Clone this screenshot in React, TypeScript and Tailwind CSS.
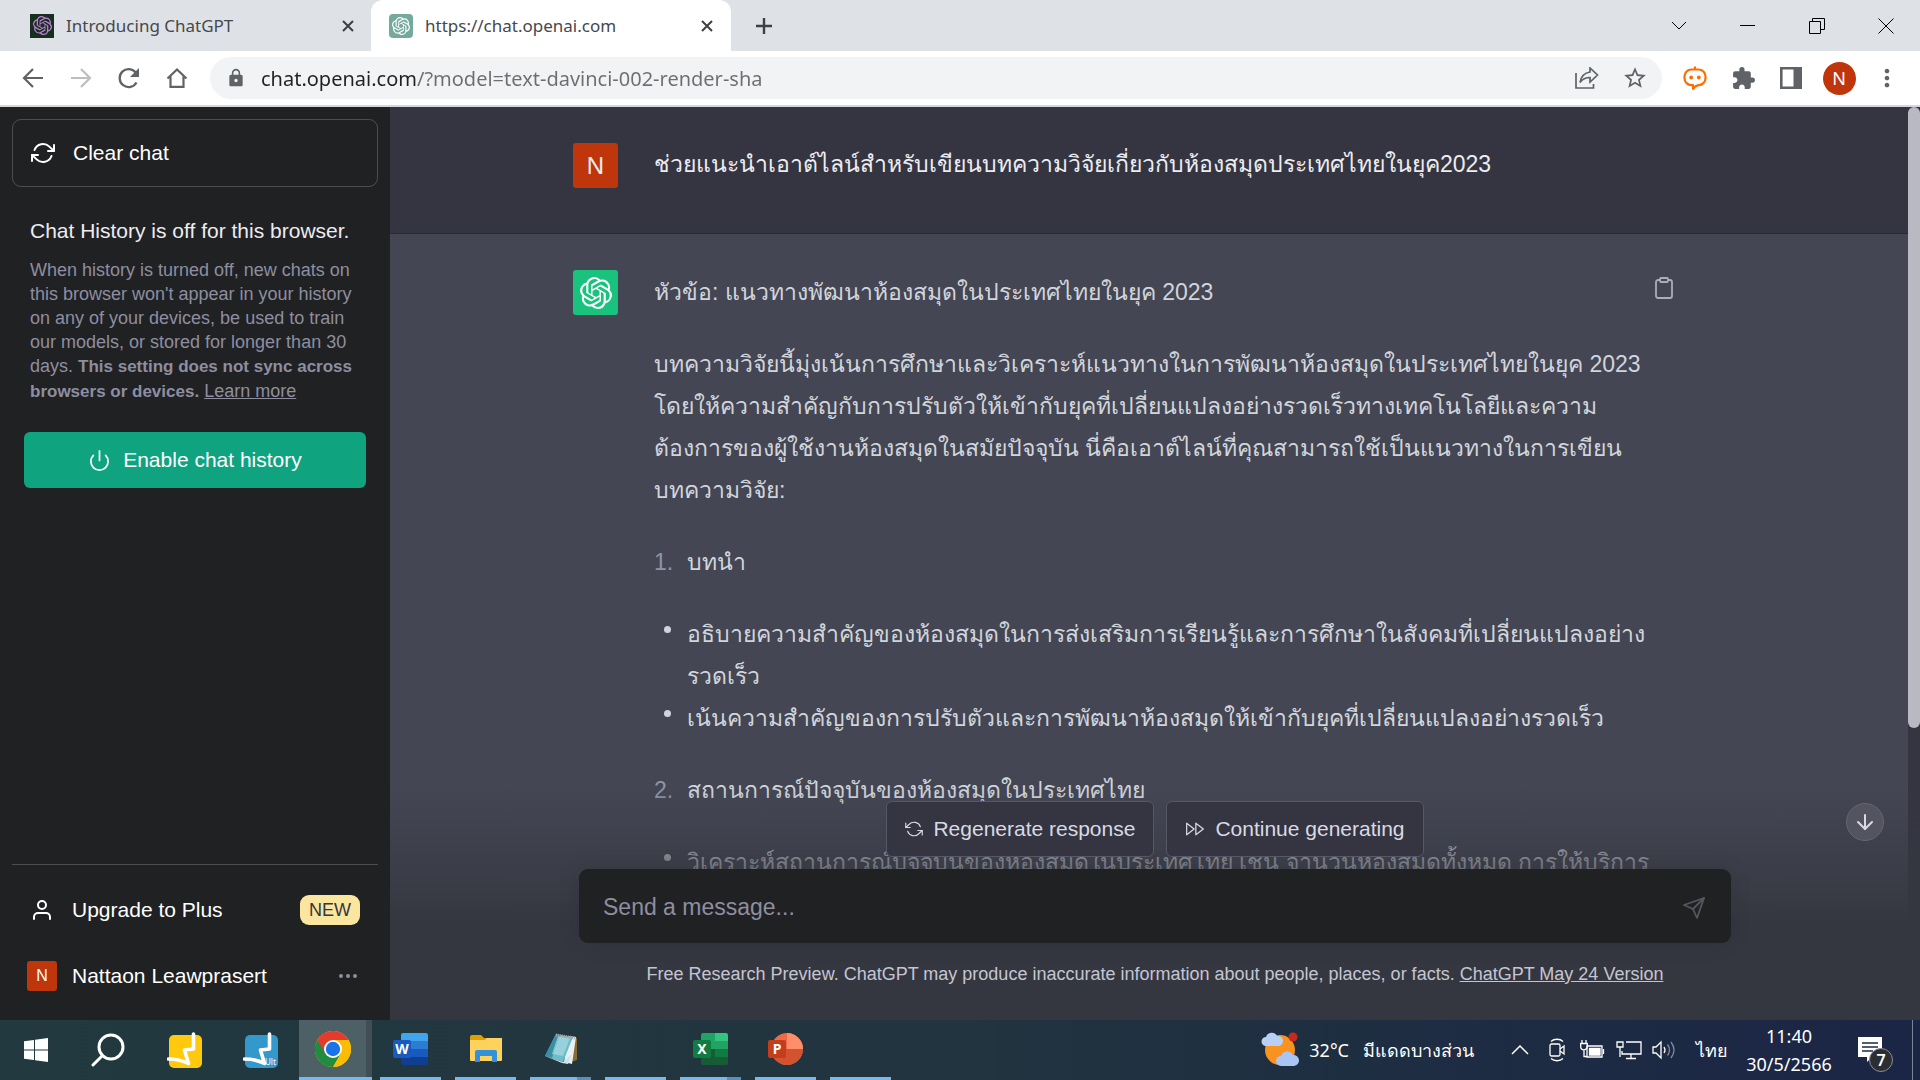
import type { ReactNode } from "react";
import {
    FiArrowDown,
    FiClipboard,
    FiFastForward,
    FiMoreHorizontal,
    FiPower,
    FiRefreshCcw,
    FiRefreshCw,
    FiSend,
    FiUser,
} from "react-icons/fi";
import { MdExtension, MdLock, MdMoreVert, MdStarBorder } from "react-icons/md";
import { SiOpenai } from "react-icons/si";

const outline = [
    {
        title: ["บทนำ"],
        points: [
            ["อธิบายความสำคัญของห้องสมุดในการส่งเสริมการเรียนรู้และการศึกษาในสังคมที่เปลี่ยนแปลงอย่าง", "รวดเร็ว"],
            ["เน้นความสำคัญของการปรับตัวและการพัฒนาห้องสมุดให้เข้ากับยุคที่เปลี่ยนแปลงอย่างรวดเร็ว"],
        ],
    },
    {
        title: ["สถานการณ์ปัจจุบันของห้องสมุดในประเทศไทย"],
        points: [
            ["วิเคราะห์สถานการณ์ปัจจุบันของห้องสมุดในประเทศไทย เช่น จำนวนห้องสมุดทั้งหมด การให้บริการ"],
        ],
    },
];

const intro = [
    "บทความวิจัยนี้มุ่งเน้นการศึกษาและวิเคราะห์แนวทางในการพัฒนาห้องสมุดในประเทศไทยในยุค 2023",
    "โดยให้ความสำคัญกับการปรับตัวให้เข้ากับยุคที่เปลี่ยนแปลงอย่างรวดเร็วทางเทคโนโลยีและความ",
    "ต้องการของผู้ใช้งานห้องสมุดในสมัยปัจจุบัน นี่คือเอาต์ไลน์ที่คุณสามารถใช้เป็นแนวทางในการเขียน",
    "บทความวิจัย:",
];

function Lines({ lines }: { lines: string[] }) {
    return (
        <>
            {lines.map((line) => (
                <span key={line} className="block whitespace-nowrap">{line}</span>
            ))}
        </>
    );
}

function CloseIcon() {
    return (
        <svg width="12" height="12" viewBox="0 0 12 12" stroke="#3c4043" strokeWidth="2" fill="none">
            <path d="M1 1l10 10M11 1L1 11" />
        </svg>
    );
}

function Tab({ title, active, icon }: { title: string; active?: boolean; icon: ReactNode }) {
    return (
        <div className={active
            ? "flex h-full w-[360px] items-center gap-3 rounded-t-xl bg-white pr-[18px] pl-[18px]"
            : "flex h-full w-[371px] items-center gap-3 pr-[17px] pl-[30px]"}
        >
            {icon}
            <span className="flex-1 text-[17px] text-[#45494d]">{title}</span>
            <button aria-label={`Close ${title}`}><CloseIcon /></button>
        </div>
    );
}

function TabStrip() {
    return (
        <div className="flex h-[51px] items-center bg-[#dee1e6]">
            <Tab
                title="Introducing ChatGPT"
                icon={<span className="flex size-6 items-center justify-center bg-[#15301c] text-[#c77be0]"><SiOpenai size={19} /></span>}
            />
            <Tab
                title="https://chat.openai.com"
                active
                icon={<span className="flex size-6 items-center justify-center rounded bg-[#75a99c] text-white"><SiOpenai size={18} /></span>}
            />
            <button aria-label="New tab" className="ml-6">
                <svg width="18" height="18" viewBox="0 0 18 18" stroke="#3c4043" strokeWidth="2.4" fill="none">
                    <path d="M9 1v16M1 9h16" />
                </svg>
            </button>
            <div className="ml-auto flex text-black">
                <button aria-label="Search tabs" className="flex h-[42px] w-[69px] items-center justify-center">
                    <svg width="16" height="10" viewBox="0 0 16 10" stroke="currentColor" fill="none"><path d="M1 1l7 7 7-7" /></svg>
                </button>
                <button aria-label="Minimize" className="flex h-[42px] w-[69px] items-center justify-center">
                    <svg width="15" height="15" viewBox="0 0 15 15" stroke="currentColor" fill="none"><path d="M0 7.5h15" /></svg>
                </button>
                <button aria-label="Restore" className="flex h-[42px] w-[69px] items-center justify-center">
                    <svg width="16" height="16" viewBox="0 0 16 16" stroke="currentColor" fill="none">
                        <path d="M.5 3.5h11v12H.5zM3.5 3.5v-3h12v11h-4" />
                    </svg>
                </button>
                <button aria-label="Close window" className="flex h-[42px] w-[69px] items-center justify-center">
                    <svg width="16" height="16" viewBox="0 0 16 16" stroke="currentColor" fill="none"><path d="M.5.5l15 15M15.5.5l-15 15" /></svg>
                </button>
            </div>
        </div>
    );
}

function NavButton({ label, children }: { label: string; children: ReactNode }) {
    return (
        <button aria-label={label} className="flex size-12 items-center justify-center text-[#5f6368]">
            {children}
        </button>
    );
}

function Toolbar() {
    return (
        <div className="flex h-14 items-center border-b-2 border-[#d5d7da] bg-white pr-[9px] pl-[9px]">
            <NavButton label="Back">
                <svg width="22" height="20" viewBox="0 0 22 20" stroke="currentColor" strokeWidth="2.2" fill="none"><path d="M21 10H2M11 1l-9 9 9 9" /></svg>
            </NavButton>
            <NavButton label="Forward">
                <svg width="22" height="20" viewBox="0 0 22 20" stroke="#bcbec1" strokeWidth="2.2" fill="none"><path d="M1 10h19M11 1l9 9-9 9" /></svg>
            </NavButton>
            <NavButton label="Reload">
                <svg width="22" height="22" viewBox="0 0 22 22" fill="none">
                    <path d="M18.5 15.5a9 9 0 1 1-.6-9.8" stroke="currentColor" strokeWidth="2.3" />
                    <path d="M21 1v9h-9z" fill="currentColor" />
                </svg>
            </NavButton>
            <NavButton label="Home">
                <svg width="22" height="22" viewBox="0 0 22 22" fill="none" stroke="currentColor" strokeWidth="2.2">
                    <path d="M1.5 11.5L11 2.5l9.500 9M4.500 9.500v10.400h13V9.500" />
                </svg>
            </NavButton>
            <div className="ml-[9px] flex h-[42px] flex-1 items-center rounded-full bg-[#f1f3f4] pr-[14px] pl-4 text-[#5f6368]">
                <MdLock size={20} />
                {/* host in near-black, path in grey */}
                <input
                    aria-label="Address"
                    defaultValue="chat.openai.com/?model=text-davinci-002-render-sha"
                    className="ml-[15px] h-[42px] min-w-0 flex-1 bg-[linear-gradient(to_right,#202124_156px,#6b6f74_156px)] bg-clip-text text-xl text-transparent outline-none"
                />
                <button aria-label="Share" className="mr-[23px]">
                    <svg width="24" height="22" viewBox="0 0 24 22" fill="none" stroke="currentColor" strokeWidth="1.7">
                        <path d="M1 6v15h17.5v-4M15 5V1l7.500 7-7.500 7v-4.500c-4.500 0-7.500 1.500-10 5C6 10 9.500 5.800 15 5z" />
                    </svg>
                </button>
                <button aria-label="Bookmark"><MdStarBorder size={26} /></button>
            </div>
            <div className="ml-[9px] flex">
                <NavButton label="Chat extension">
                    <svg width="24" height="24" viewBox="0 0 24 24" fill="none" stroke="#ff6d00" strokeWidth="2.2">
                        <path d="M12 .5V3M10 19.200H8.500a7 7 0 0 1-7-7V10.500a7 7 0 0 1 7-7h7a7 7 0 0 1 7 7v1.700a7 7 0 0 1-7 7c-2 .3-4 1.500-5.500 3.600z" strokeLinejoin="round" />
                        <circle cx="8.2" cy="11.5" r="1.9" fill="#ff6d00" stroke="none" />
                        <circle cx="15.8" cy="11.5" r="1.9" fill="#ff6d00" stroke="none" />
                    </svg>
                </NavButton>
                <NavButton label="Extensions"><MdExtension size={25} /></NavButton>
                <NavButton label="Side panel">
                    <svg width="22" height="22" viewBox="0 0 22 22" fill="none">
                        <path d="M1.3 1.3h19.400v19.400H1.300z" stroke="currentColor" strokeWidth="2.6" />
                        <path d="M13.500 0H22v22h-8.500z" fill="currentColor" />
                    </svg>
                </NavButton>
                <button className="flex size-12 items-center justify-center">
                    <span className="flex size-[33px] items-center justify-center rounded-full bg-[#bf360c] text-lg text-white">N</span>
                </button>
                <NavButton label="Menu"><MdMoreVert size={28} /></NavButton>
            </div>
        </div>
    );
}

function Sidebar() {
    return (
        <aside className="flex w-[390px] shrink-0 flex-col bg-[#202123] px-3 pt-3 pb-[11px] text-[21px] leading-[30px] text-white">
            <button className="flex h-[68px] items-center gap-[18px] rounded-[9px] border border-white/20 pl-[18px] text-left">
                <FiRefreshCw size={24} />
                Clear chat
            </button>
            <div className="mt-[29px] px-[18px]">
                <h2 className="whitespace-nowrap text-[#ececf1]">Chat History is off for this browser.</h2>
                <p className="mt-3 text-lg leading-6 whitespace-nowrap text-[#8e8ea0]">
                    When history is turned off, new chats on<br />
                    this browser won&apos;t appear in your history<br />
                    on any of your devices, be used to train<br />
                    our models, or stored for longer than 30<br />
                    days. <strong className="text-[17px] font-bold">This setting does not sync across<br />
                    browsers or devices.</strong> <a href="#learn" className="underline">Learn more</a>
                </p>
            </div>
            <button className="mx-3 mt-7 flex h-14 items-center justify-center gap-3 rounded-md bg-[#10a37f]">
                <FiPower size={23} strokeWidth={1.8} />
                Enable chat history
            </button>
            <div className="mt-auto border-t border-white/20 pt-3">
                <button className="flex h-[66px] w-full items-center pr-[18px] pl-[18px]">
                    <FiUser size={24} />
                    <span className="ml-[18px] flex-1 text-left">Upgrade to Plus</span>
                    <span className="rounded-[9px] bg-[#fae69e] px-[9px] text-lg leading-[30px] text-[#343541]">NEW</span>
                </button>
                <button className="flex h-[66px] w-full items-center pr-[18px] pl-[15px]">
                    <span className="flex size-[30px] items-center justify-center rounded-[3px] bg-[#bf360c] text-base">N</span>
                    <span className="ml-[15px] flex-1 text-left">Nattaon Leawprasert</span>
                    <FiMoreHorizontal size={24} className="text-[#8e8ea0]" />
                </button>
            </div>
        </aside>
    );
}

function Conversation() {
    return (
        <div className="min-w-0 flex-1 text-[23px] leading-[42px]">
            <div className="border-b border-[#2a2b32] bg-[#343541] pt-9 pb-[45px]">
                <div className="mx-auto flex max-w-[1152px] gap-9 text-[#ececf1]">
                    <span className="flex size-[45px] shrink-0 items-center justify-center rounded-[3px] bg-[#bf360c] text-2xl">N</span>
                    <p className="whitespace-nowrap">ช่วยแนะนำเอาต์ไลน์สำหรับเขียนบทความวิจัยเกี่ยวกับห้องสมุดประเทศไทยในยุค2023</p>
                </div>
            </div>
            <div className="bg-[#444654] pt-9">
                <div className="mx-auto flex max-w-[1152px] gap-9 text-[#d1d5db]">
                    <span className="flex size-[45px] shrink-0 items-center justify-center rounded-[3px] bg-[#19c37d] text-white"><SiOpenai size={32} /></span>
                    <div className="flex min-w-0 flex-1 flex-col gap-[30px] pt-px">
                        <p>หัวข้อ: แนวทางพัฒนาห้องสมุดในประเทศไทยในยุค 2023</p>
                        <p><Lines lines={intro} /></p>
                        {outline.map((section, i) => (
                            <section key={section.title[0]} className="flex flex-col gap-[30px]">
                                <div className="flex">
                                    <span className="w-[33px] text-[#8e95a6]">{i + 1}.</span>
                                    <h3><Lines lines={section.title} /></h3>
                                </div>
                                <ul>
                                    {section.points.map((point) => (
                                        <li key={point[0]} className="flex">
                                            <span className="mt-[13px] mr-4 ml-[10px] size-[7px] shrink-0 rounded-full bg-[#d1d5db]" />
                                            <div><Lines lines={point} /></div>
                                        </li>
                                    ))}
                                </ul>
                            </section>
                        ))}
                        <div className="h-40" />
                    </div>
                    <button aria-label="Copy" className="mt-[6px] mr-[49px] self-start text-[#acacbe]"><FiClipboard size={24} strokeWidth={1.8} /></button>
                </div>
            </div>
        </div>
    );
}

function Composer() {
    return (
        <div className="absolute inset-x-0 bottom-0 bg-linear-to-b from-[#353740]/0 to-[#353740] to-[59%] pt-[15px] text-[#d9d9e3]">
            <div className="mx-auto max-w-[1152px]">
                <div className="flex justify-center gap-3 text-[21px]">
                    <button className="flex h-[56px] items-center gap-[10px] rounded-md border border-[#565869] bg-[#343541] px-[18px]">
                        <FiRefreshCcw size={18} strokeWidth={1.5} />
                        Regenerate response
                    </button>
                    <button className="flex h-[56px] items-center gap-[10px] rounded-md border border-[#565869] bg-[#343541] px-[18px]">
                        <FiFastForward size={20} strokeWidth={1.5} />
                        Continue generating
                    </button>
                </div>
                <form className="mt-3 flex h-[74px] items-center rounded-[9px] bg-[#202123] pt-0.5 pr-[25px] pl-6 shadow-[0_0_22px_rgba(0,0,0,0.1)]">
                    <input aria-label="Send a message" placeholder="Send a message..." className="flex-1 bg-transparent text-[23px] outline-none placeholder:text-[#8e8ea0]" />
                    <button type="button" aria-label="Send" className="mt-0.5 text-[#55565f]"><FiSend size={24} strokeWidth={1.8} /></button>
                </form>
                <p className="pt-[19px] pb-[34px] text-center text-lg leading-6 text-[#c5c5d2]">
                    Free Research Preview. ChatGPT may produce inaccurate information about people, places, or facts.{" "}
                    <a href="#release" className="underline">ChatGPT May 24 Version</a>
                </p>
            </div>
            <button aria-label="Scroll to bottom" className="absolute top-[17px] right-9 flex size-[38px] items-center justify-center rounded-full border border-[#65666f] bg-[#53545f]">
                <FiArrowDown size={24} />
            </button>
        </div>
    );
}

function OfficeLetter({ letter, fill }: { letter: string; fill: string }) {
    return (
        <>
            <rect x="0" y="7" width="18" height="18" rx="2" fill={fill} />
            <text x="9" y="21" textAnchor="middle" fontSize="14" fontWeight="700" fill="#fff">{letter}</text>
        </>
    );
}

function WordIcon() {
    return (
        <svg width="36" height="32" viewBox="0 0 36 32">
            <path d="M8 2a2 2 0 0 1 2-2h23a2 2 0 0 1 2 2v6H8z" fill="#41a5ee" />
            <path d="M8 8h27v8H8z" fill="#2b7cd3" />
            <path d="M8 16h27v8H8z" fill="#185abd" />
            <path d="M8 24h27v6a2 2 0 0 1-2 2H10a2 2 0 0 1-2-2z" fill="#103f91" />
            <OfficeLetter letter="W" fill="#185abd" />
        </svg>
    );
}

function ExcelIcon() {
    return (
        <svg width="36" height="32" viewBox="0 0 36 32">
            <path d="M8 2a2 2 0 0 1 2-2h12v8H8z" fill="#21a366" />
            <path d="M22 0h11a2 2 0 0 1 2 2v6H22z" fill="#33c481" />
            <path d="M8 8h14v8H8z" fill="#21a366" />
            <path d="M22 8h13v8H22z" fill="#21a366" />
            <path d="M22 16h13v8H22z" fill="#107c41" />
            <path d="M8 16h14v8h13v6a2 2 0 0 1-2 2H10a2 2 0 0 1-2-2z" fill="#185c37" />
            <OfficeLetter letter="X" fill="#107c41" />
        </svg>
    );
}

function PowerPointIcon() {
    return (
        <svg width="36" height="32" viewBox="0 0 36 32">
            <circle cx="19" cy="16" r="16" fill="#ed6c47" />
            <path d="M19 0a16 16 0 0 1 16 16H19z" fill="#ff8f6b" />
            <path d="M3 16h32a16 16 0 0 1-32 0z" fill="#d35230" />
            <OfficeLetter letter="P" fill="#c43e1c" />
        </svg>
    );
}

function ExplorerIcon() {
    return (
        <svg width="34" height="28" viewBox="0 0 34 28">
            <path d="M1 2a2 2 0 0 1 2-2h9l3 3h17v6H1z" fill="#e0a100" />
            <path d="M1 5h15l2-2h15v22a1 1 0 0 1-1 1H2a1 1 0 0 1-1-1z" fill="#ffd25e" />
            <path d="M6 27V17a2 2 0 0 1 2-2h18a2 2 0 0 1 2 2v10h-5v-6H11v6z" fill="#3391dc" />
        </svg>
    );
}

function NotepadIcon() {
    return (
        <svg width="34" height="32" viewBox="0 0 34 32">
            <path d="M29 4l4 1v22l-6 2z" fill="#8a6a35" />
            <path d="M24 3l8 1-4 27-8-2z" fill="#e8f0f2" />
            <path d="M12 1L1 23l18 6 10-25z" fill="#6dbccb" />
            <path d="M12 1L1 23l7 2 8-23z" fill="#3a8fa3" />
            <path d="M14 3l12 2-7 18-11-2z" fill="#a9dae3" opacity=".7" />
            <path d="M1 23l18 6 9-8-4 10-6-1z" fill="#cfe3e7" />
            <path d="M12 2l19 3" stroke="#9aa5a8" strokeWidth="3" strokeDasharray="1 1" />
        </svg>
    );
}

function ChromeIcon() {
    return (
        <svg width="36" height="36" viewBox="0 0 48 48">
            <circle cx="24" cy="24" r="24" fill="#fbbc04" />
            <path d="M24 24L3.200 12A24 24 0 0 0 24 48l10.400-18z" fill="#1e8e3e" />
            <path d="M24 12h20.800A24 24 0 0 0 3.200 12l10.400 18z" fill="#e33b2e" />
            <path d="M34.400 30L24 48a24 24 0 0 0 20.800-36H24z" fill="#fbbc04" />
            <circle cx="24" cy="24" r="12" fill="#fff" />
            <circle cx="24" cy="24" r="9.6" fill="#1a73e8" />
        </svg>
    );
}

function ReaderIcon({ fill, caption }: { fill: string; caption?: string }) {
    return (
        <svg width="36" height="36" viewBox="0 0 36 36">
            <rect x="2" y="3" width="33" height="33" rx="5" fill={fill} />
            <path d="M1.500 27c7 0 13 1 20 4.500L17.500 18l9-1V2" fill="none" stroke="#fff" strokeWidth="3.6" strokeLinecap="round" strokeLinejoin="round" />
            {caption && <text x="22" y="33" fontSize="8" fill="#fff">{caption}</text>}
        </svg>
    );
}

const apps = [
    { name: "Chrome", icon: <ChromeIcon />, active: true },
    { name: "Word", icon: <WordIcon /> },
    { name: "File Explorer", icon: <ExplorerIcon /> },
    { name: "Notepad", icon: <NotepadIcon />, stacked: true },
    { name: "Photos", icon: null },
    { name: "Excel", icon: <ExcelIcon />, stacked: true },
    { name: "PowerPoint", icon: <PowerPointIcon /> },
    { name: "Settings", icon: null },
];

function Taskbar() {
    return (
        <footer className="flex h-[60px] shrink-0 items-stretch bg-linear-to-r from-[#22393f] via-[#21343f] via-50% to-[#1b2545] text-lg text-white">
            <button aria-label="Start" className="flex w-[72px] items-center justify-center">
                <svg width="24" height="24" viewBox="0 0 24 24" fill="#fff">
                    <path d="M0 3.300L10 2v9.500H0zM11 1.800L24 0v11.500H11zM0 12.500h10V22L0 20.700zM11 12.500h13V24l-13-1.800z" />
                </svg>
            </button>
            <button aria-label="Search" className="flex w-[75px] items-center justify-center pr-1">
                <svg width="34" height="34" viewBox="0 0 34 34" fill="none" stroke="#fff" strokeWidth="3">
                    <circle cx="20" cy="14" r="12" /><path d="M11.500 22.500L2 32" strokeLinecap="round" />
                </svg>
            </button>
            <button aria-label="Reader" className="flex w-[76px] items-center justify-center"><ReaderIcon fill="#ffc90e" /></button>
            <button aria-label="Reader Ult" className="flex w-[75px] items-center justify-center"><ReaderIcon fill="#3398cc" caption="Ult" /></button>
            {apps.map((app) => (
                <button
                    key={app.name}
                    aria-label={app.name}
                    className={app.active ? "flex w-[75px] flex-col bg-[#4d6066] bg-clip-content px-px" : "flex w-[75px] flex-col px-[7px]"}
                >
                    <span className={app.active ? "flex w-full flex-1 items-center justify-center border-r-6 border-[#3f4f55]" : "flex w-full flex-1 items-center justify-center"}>{app.icon}</span>
                    <span className="flex h-[3px] w-full">
                        <span className="flex-1 bg-[#76b9ed]" />
                        {app.stacked && <span className="w-[14px] bg-[#5a8fbd]" />}
                    </span>
                </button>
            ))}
            <div className="ml-auto flex items-center">
                <svg width="38" height="36" viewBox="0 0 38 36">
                    <circle cx="19" cy="18" r="15" fill="#f7931e" />
                    <circle cx="32" cy="5" r="4.5" fill="#c42b1c" />
                    <path d="M5 14a4.500 4.500 0 0 1 0-9 6 6 0 0 1 11-1 5 5 0 0 1 2 10z" fill="#b9d0f5" />
                    <path d="M20 34a5 5 0 0 1 0-10 6.500 6.500 0 0 1 12-1 5.500 5.500 0 0 1 1 11z" fill="#a9c5f3" />
                </svg>
                <span className="ml-[10px]">32°C</span>
                <span className="ml-[14px]">มีแดดบางส่วน</span>
                <svg className="ml-[37px]" width="18" height="10" viewBox="0 0 18 10" fill="none" stroke="#fff" strokeWidth="1.5"><path d="M1 9l8-8 8 8" /></svg>
                <svg className="ml-5" width="16" height="24" viewBox="0 0 16 24" fill="none" stroke="#fff" strokeWidth="1.3">
                    <rect x="1" y="6" width="10" height="12" rx="1.5" /><path d="M11 11l4-3v8l-4-3M2 3.500c3-3 9-3 12 0M2 20.500c3 3 9 3 12 0" />
                </svg>
                <svg className="ml-[15px]" width="25" height="20" viewBox="0 0 25 20" fill="none" stroke="#fff" strokeWidth="1.3">
                    <path d="M7 6h15v11H7z" /><path d="M9.500 8.500h10.500v6.500H9.500z" fill="#fff" /><path d="M23.500 9v5M2 0v3M6 0v3M.7 3.500h6.600v3a3 3 0 0 1-6.600 0zM4 10v6.500h3" />
                </svg>
                <svg className="ml-[11px]" width="26" height="22" viewBox="0 0 26 22" fill="none" stroke="#fff" strokeWidth="1.3">
                    <path d="M10 3h15v12H6v-3M15 15v4M10 19.500h10M1 3h6v5H1zM4 8v10" />
                </svg>
                <svg className="ml-[10px]" width="24" height="20" viewBox="0 0 24 20" fill="none" stroke="#fff" strokeWidth="1.3">
                    <path d="M1 7h3l5-5v16l-5-5H1zM12 7q2 3 0 6" /><path d="M15.500 4.500q4 5.500 0 11M19 2q6 8 0 16" stroke="#7f8aa0" />
                </svg>
                <span className="ml-5 w-7 whitespace-nowrap">ไทย</span>
                <span className="flex w-[130px] flex-col items-center leading-7">
                    <time>11:40</time>
                    <time>30/5/2566</time>
                </span>
                <button aria-label="Notifications" className="relative mr-[29px] ml-[3px]">
                    <svg width="26" height="28" viewBox="0 0 26 28" fill="none">
                        <path d="M1 1h24v20H15l-5 5v-5H1z" fill="#fff" /><path d="M5 7h16M5 11h16M5 15h11" stroke="#1c2843" strokeWidth="1.5" />
                    </svg>
                    <span className="absolute top-3 left-3 flex size-6 items-center justify-center rounded-full border border-[#8b8f96] bg-[#2b2e33] text-base font-semibold">7</span>
                </button>
                <span className="mr-[7px] h-[60px] w-px bg-[#7b8596]" />
            </div>
        </footer>
    );
}

export default function App() {
    return (
        <div className="flex h-screen flex-col overflow-hidden font-['Noto_Sans',sans-serif]">
            <header>
                <TabStrip />
                <Toolbar />
            </header>
            <div className="flex min-h-0 flex-1 font-['Liberation_Sans',sans-serif]">
                <Sidebar />
                <main className="relative flex min-w-0 flex-1 overflow-hidden bg-[#343541]">
                    <Conversation />
                    <div className="w-3 shrink-0 bg-[#343541]">
                        <div className="h-[68%] rounded-full bg-[#b9b9c3]" />
                    </div>
                    <Composer />
                </main>
            </div>
            <Taskbar />
        </div>
    );
}
